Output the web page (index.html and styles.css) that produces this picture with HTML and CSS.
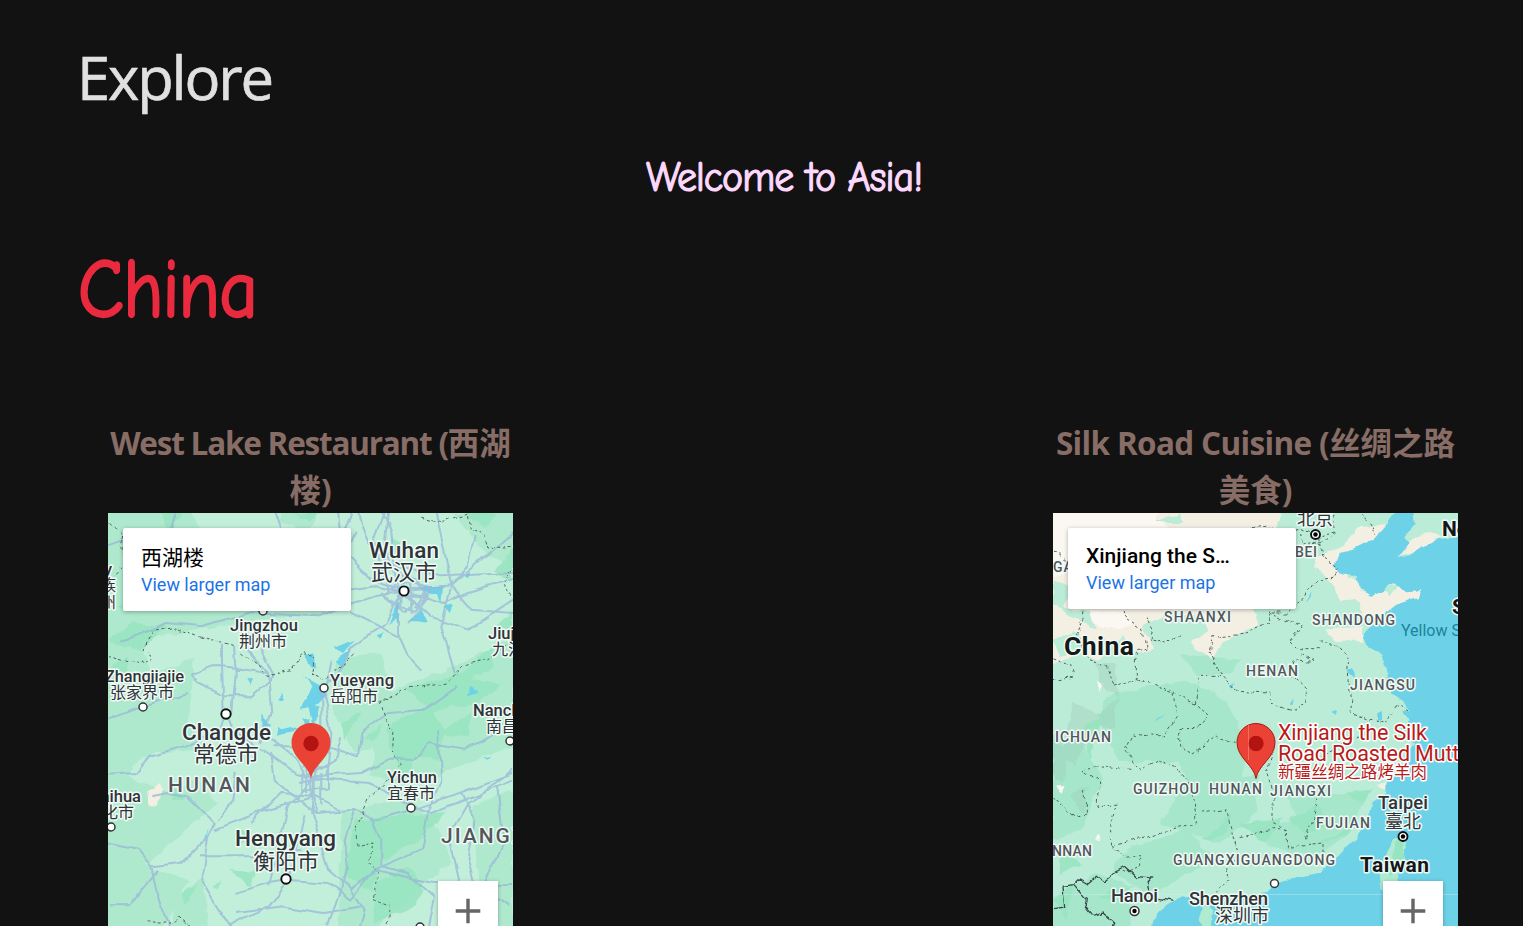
FILE: index.html
```html
<!DOCTYPE html>
<html lang="en">
<head>
<meta charset="utf-8">
<title>Explore</title>
<link rel="stylesheet" href="styles.css">
</head>
<body>
<main class="page">
  <h1 class="title"><svg width="210" height="90"><text x="-3" y="60" textLength="195" lengthAdjust="spacingAndGlyphs">Explore</text></svg></h1>
  <h2 class="welcome"><svg width="280" height="60"><text x="3" y="41" textLength="276" lengthAdjust="spacingAndGlyphs">Welcome to Asia!</text></svg></h2>
  <h2 class="country"><svg width="200" height="94"><text x="-2" y="71" textLength="179" lengthAdjust="spacingAndGlyphs">China</text></svg></h2>
  <section class="places">
    <article class="place">
      <h3 class="name"><span class="latin west">West Lake Restaurant (</span>西湖<br>楼)</h3>
      <div class="map">
        <svg class="canvas" viewBox="0 0 405 420" width="405" height="420">
          <defs>
            <filter id="rough" x="-5%" y="-5%" width="110%" height="110%"><feTurbulence type="fractalNoise" baseFrequency="0.055" numOctaves="3" seed="4"/><feDisplacementMap in="SourceGraphic" scale="9" xChannelSelector="R" yChannelSelector="G"/></filter>
            <filter id="wobble" x="-5%" y="-5%" width="110%" height="110%" color-interpolation-filters="sRGB"><feTurbulence type="fractalNoise" baseFrequency="0.05" numOctaves="1" seed="8"/><feDisplacementMap in="SourceGraphic" scale="9" xChannelSelector="R" yChannelSelector="G"/><feGaussianBlur stdDeviation=".35"/></filter>
          </defs>
          <rect width="405" height="420" fill="#c1efd9"/>
          <g filter="url(#rough)"><g transform="scale(.33333)">
            <path class="mid" d="M-30-30H230L300 80 500 130 660 300 550 310 380 330 260 350 100 380 130 480 260 440 240 640 300 700 100 730 60 790 200 850 240 940 110 1060 240 1100 160 1260H-30ZM530-20H640L600 60 520 30ZM1040 0L1215-20V180L1130 120ZM680 440L820 420 870 600 820 700 740 720 680 600ZM850 540L1215 380V700L1050 760 900 820 790 790 800 640ZM700 900L900 850 990 950 1030 1050 920 1140 790 1260H690ZM1090 880L1215 830V1260H1120ZM260 790L330 870 190 990 150 900ZM200 1160L290 1090 300 1260H190Z"/>
            <path class="dark" d="M160 0L220 0 190 60ZM0 380L80 330 180 340 100 410ZM30 280L150 220 100 300ZM550 0H640L600 25ZM1070 0H1170L1130 45ZM850 70L875 90 860 125ZM1160 180L1215 100V200ZM1170 330L1215 300V390ZM0 470L60 430 50 500ZM700 640L760 595 750 630 705 675ZM770 670L825 635 800 685ZM840 635L960 580 1010 650 990 740 930 730 890 790 840 700ZM900 530L1050 480 1180 520 1100 570 970 600ZM990 660L1090 600 1080 670ZM740 920L860 910 1010 900 930 990 820 1040 790 1140 710 1090ZM800 1110L900 1060 950 1120 920 1180 800 1230ZM1030 510L1150 400 1160 470ZM360 1070L440 1080 430 1120ZM315 1120L340 1095 330 1130ZM220 1140L270 1120 230 1180ZM400 950L440 970 400 995ZM190 820L230 850 190 870Z"/>
            <path class="water" d="M570 590L620 520 590 490 635 515 655 545 615 585ZM510 665L515 635 575 650ZM585 620L605 615 600 640ZM600 580L635 580 615 635ZM680 440L730 405 700 460ZM460 650L460 605 490 635ZM1075 550L1085 515 1115 540ZM415 490L435 500 425 515ZM510 555L525 540 525 560ZM1120 740L1150 735 1140 743ZM285 970L300 940 290 970ZM590 430L620 420 625 465 595 445Z"/>
            <path class="sand" d="M120 840L155 810 165 830 145 880 125 875Z"/>
          </g></g>
          <g filter="url(#wobble)"><g transform="scale(.33333)">
            <path class="water" d="M840 330L880 260 870 310ZM900 325L940 285 960 330 930 325ZM935 225L1005 220 1000 270 990 240 960 240ZM680 405L740 380 705 420ZM800 370L825 360 810 380ZM860 310L875 305 865 330ZM1010 280L1035 275 1025 300ZM1070 190L1090 175 1080 195Z"/>
            <g class="road">
              <path d="M0 100L70 75 180 90 210-20M500-10L530 80 600 110 690 90 740-20M750 0L780 90 840 150 1000 190 1215 180M690-10L700 110 790 200 890 235 1030 220 1215 60M980 0L1010 130 1030 220 1000 340 1040 480M840 0L830 90 870 230 870 360 900 430 940 470M1100 60L1080 160 1030 220M890 235L800 250 740 270 630 310 420 300 280 340 180 330 80 370 40 380M890 235L970 310 1080 350 1215 260M890 235L830 330 730 400 690 480 640 530 640 700 620 790 610 900 660 1070 730 1130 770 1190 750 1260M890 240L800 220 720 230M900 235L1010 270 1080 240 1215 200M1030 220L1090 290 1215 300M890 200L860 160 850 60 820-10M740 50L690 190 730 300 870 370"/>
              <path d="M250 480L300 460 345 460 480 480M250 480L270 510 350 550M345 390V460L350 600 370 650 480 720 560 780 650 800 780 810 900 870 970 900 1215 800M375 400L380 480 370 600M0 785L80 780 120 730 230 700 330 650 350 600M0 620L80 590 240 540M0 990L90 1010 130 1060 220 1050 300 970 320 930 240 850 180 840 130 850M350 550L430 550 500 490 460 410M460 690L490 600 480 480 410 400M620 790L620 900 740 890 800 920 880 900 1000 860 1215 780M620 790L540 880 520 960 480 1120M620 790L760 780 840 740 920 740 960 690 1070 710 1215 640M670 440L650 560 670 660 655 790M0 1180L60 1180 150 1070M130 1060L150 1160 190 1260M300 970L280 1100 340 1200 380 1260M330 920L370 860 380 780M320 950L450 900 620 850M270 1030L440 1030 580 1010M350 1250L480 1180 540 1100 560 1020 590 910M380 1140L480 1110 540 1100 660 1110 730 1160 800 1070 980 1110 1215 1110M390 1200L520 1180 650 1200 760 1180M730 1130L820 1060 820 980 790 910M740 890L710 980 720 1060 680 1180 660 1240M800 1070L940 1010 960 900 1000 800 990 650M1000 1250L1050 1100 1020 970 1080 870 1215 770M820 1060L900 1080 980 1150 960 1260M1170 820L1190 980 1120 1120 1200 1180M1060 840L1100 920 1080 1050 1120 1200"/>
              <path d="M590 790L560 730 480 670M580 770V830H660V760H580M595 760V840M610 770V850M640 780V880M570 800H680M500 700L650 700 750 730 760 660 840 600 950 590 1050 520M700 670L680 740 590 790M490 720L500 800 620 900M430 930L520 840 620 850 700 890M830 0L800 80 840 230 920 260 890 300 830 250 860 210 930 210 960 250 900 330M870 180L930 200 950 240 920 280M820 240L860 280 920 290 970 230 890 190M850 225H970M855 245H960M880 190V290M910 200V300"/>
            </g>
          </g></g>
          <g filter="url(#rough)"><g transform="scale(.33333)">
            <g class="border"><path d="M-5 20L40 60 45 160 20 190M940 10L1010 25 1080 0 1090 50 1130 70 1140 105 1215 100M1215 170L1185 210 1215 250M110 410L130 360 200 345 270 370 380 400M0 430L90 455 135 440 130 410M400 420L450 460 480 490 550 470 580 425 620 430 610 480 650 500 740 420M1215 390L1140 440 1060 460 1020 510 890 530 820 570 830 610 855 650 850 720 880 750 830 810 780 860 745 940 750 1000 795 990 785 1050 810 1080 795 1160 845 1180 835 1250M115 1230L190 1230 210 1210 260 1250"/></g>
          </g></g>
          <g class="dots"><circle class="big" cx="296" cy="78" r="4.6"/><circle cx="155" cy="98" r="4"/><circle cx="35" cy="194" r="4"/><circle class="big" cx="118" cy="201" r="4.7"/><circle cx="216" cy="175" r="4"/><circle cx="402" cy="228" r="4"/><circle cx="303" cy="295" r="4"/><circle cx="3" cy="314" r="4"/><circle class="big" cx="178" cy="366" r="4.7"/><circle cx="312" cy="414" r="4"/></g>
          <g class="label">
            <g class="city"><text x="261" y="45" textLength="70">Wuhan</text><text class="han" x="263" y="67">武汉市</text><text x="74" y="227" textLength="89">Changde</text><text class="han" x="85" y="249">常德市</text><text x="127" y="333" textLength="101">Hengyang</text><text class="han" x="145" y="356">衡阳市</text></g>
            <text x="122" y="118" textLength="68">Jingzhou</text><text class="han" x="131" y="134">荆州市</text><text x="380" y="126">Jiujiang</text><text class="han" x="384" y="142">九江市</text><text x="-4" y="62">y</text><text class="han" x="-8" y="78">族</text><text class="han" x="-8" y="95">州</text><text x="-3" y="169" textLength="79">Zhangjiajie</text><text class="han" x="2" y="185">张家界市</text><text x="222" y="173" textLength="64">Yueyang</text><text class="han" x="222" y="189">岳阳市</text><text x="365" y="203">Nanchang</text><text class="han" x="378" y="219">南昌市</text><text x="279" y="270" textLength="50">Yichun</text><text class="han" x="279" y="286">宜春市</text><text x="33" y="289" text-anchor="end">Huaihua</text><text class="han" x="26" y="305" text-anchor="end">怀化市</text>
            <g class="province large"><text x="60" y="279" textLength="84">HUNAN</text><text x="333" y="330">JIANGXI</text></g>
          </g>
          <path fill="#ea4335" d="M203 266C201 252 183.500 245 183.500 229.500A19.500 19.500 0 0 1 222.500 229.500C222.500 245 205 252 203 266Z"/><circle cx="203" cy="230.500" r="7.700" fill="#b31412"/>
        </svg>
        <div class="card tall"><div class="card-title cjk">西湖楼</div><div class="card-link">View larger map</div></div>
        <button class="plus" aria-label="Zoom in"><svg width="26" height="26"><path d="M13 .7V25.300M.7 13H25.300"/></svg></button>
      </div>
    </article>
    <article class="place">
      <h3 class="name"><span class="latin silk">Silk Road Cuisine (</span>丝绸之路<br>美食)</h3>
      <div class="map">
        <svg class="canvas" viewBox="0 0 405 420" width="405" height="420">
          <rect width="405" height="420" fill="#bbecd8"/>
          <g filter="url(#rough)"><g transform="scale(.33333)">
            <path class="mid2" d="M160 550L400 500 520 560 580 700 560 800 420 850 380 750 200 740 130 620ZM400 810L620 780 610 900 500 990 320 930ZM230 1000L400 950 500 1040 390 1090 290 1150 180 1080ZM600 950L820 900 900 950 790 1030 650 1000ZM0 660L90 700 150 800 80 950 0 980ZM380 420L560 440 540 480 430 490ZM0 1150L130 1080 230 1120 230 1260H0ZM700 850L960 830 880 960 740 920Z"/>
            <path class="grey" d="M130 450L180 450 200 560 160 530ZM60 570L130 600 200 560 180 640 110 650 70 760 30 730ZM0 680L50 710 30 810 0 790ZM50 840L110 820 90 900Z"/>
            <path class="dark" d="M440 980L540 900 510 970ZM550 930L690 920 640 990ZM710 920L800 870 820 930 760 970ZM80 650L150 600 110 740ZM780 1000L900 930 880 960ZM0 1160L60 1110 40 1220ZM130 1150L250 1120 180 1160ZM30 1010L90 1060 20 1080ZM880 840L960 830 930 870ZM1010 1000L1050 980 1040 1050Z"/>
            <path class="sand" d="M-30-30H700L660 60 590 40 540 170 610 300 620 340 560 360 500 390 480 440 410 390 470 350 450 310 330 310 270 340 300 410 240 430 210 360 140 440 80 420-30 470ZM790 130L870 100 920 40 1000 30 960 100 900 140 880 190 920 200 920 240 1000 220 1060 200 1110 230 1100 260 1000 300 930 310 920 270 860 260 830 200 780 160ZM1040 130L1070 80 1130 60 1170 70 1110 110ZM820 350L930 340 930 390 850 380ZM970 819L1010 790 1000 830Z"/>
            <path fill="#fbf8f2" d="M-30-30H340L300 20 350 45 230 90 100 180 0 190ZM100 300L220 290 240 340 150 350ZM135 500L155 510 145 540ZM10 820L35 820 25 840ZM120 980L130 965 140 980Z"/>
            <path class="wash" d="M300 30L380 0 390 30ZM0 200L60 230 30 280 110 300 130 350 60 310 0 270ZM700 0H880L840 90 760 60 720 110ZM680 300L780 290 760 360 690 370ZM980 220L1040 215 1010 250ZM0 380L60 360 110 400 20 430ZM150 380L200 400 160 440ZM340 330L400 320 380 370Z"/>
            <path fill="#6dd2e8" d="M1040-20L1000 40 960 80 900 110 860 120 848 150 860 180 915 190 920 230 950 248 985 235 1020 210 1060 235 1103 232 1095 255 1030 275 985 310 945 345 930 375 945 400 980 411 1000 470 1005 520 1040 560 1070 590 1045 595 1070 625 1050 650 1090 690 1060 720 1075 740 1000 790 1000 840 960 870 950 920 910 980 880 1010 850 1030 800 1080 760 1090 710 1100 670 1110 640 1140 560 1150 480 1175 440 1180 430 1160 390 1150 360 1170 310 1200 280 1280H1280V60L1150 80 1110 100 1075 125 1035 135 1060 100 1070 85 1050 75 1085 30 1080-20Z"/>
            <path fill="#aeebd0" d="M450 1180L480 1190 475 1260H460L440 1220ZM1020 980L1060 965 1068 1000 1050 1060 1015 1130H985L980 1080 1000 1020Z"/>
            <path fill="#96e5c0" d="M1035 970L1060 965 1060 1040 1005 1090Z"/>
            <path class="water" d="M760 270L785 235 780 255ZM885 475L905 465 910 495ZM835 590L850 585 845 600ZM710 570L720 550 715 575ZM970 600L990 595 990 620 970 625ZM530 520L545 510 540 530ZM730 480L760 510ZM310 620L340 600 320 620Z"/>
            <g class="border"><path d="M0 120L40 150M580 45L640 40 700 60 740 45 790 70 850 60 840 0M740 60L745 90 830 80 850 60M910-10L950 30 965 65M800 70L810 130 860 160 840 190 790 200 750 260 700 300 650 300 650 330 580 360 480 370 475 420 510 490 550 535 650 540 655 570 720 595 740 580 760 560 755 530 710 490 720 440 780 445 740 420M0 500L60 490 50 460 0 440M100 250L90 320 60 390M80 380L110 440 160 460 180 520 250 500 250 420 280 410 270 350 220 320 220 290M280 310L300 350 290 380 340 390 390 360M250 500L360 540 370 610 330 670 240 660 215 710 260 770 320 740 370 760 420 830 430 930 310 960 180 1000 170 940 190 880 135 880 140 810 90 770 160 760 240 770M360 540L430 570 465 610 440 640 380 650 380 700 420 720 490 670 550 690 610 660M430 570L440 490 510 490M650 300L750 340 710 380 740 410 800 410M800 390L850 390 890 440 885 500 900 560 890 600 940 620 1000 630 1040 580 1065 590M660 720L640 780 660 830 660 930 700 950 700 1000 810 990 810 1030M800 840L790 900 760 980M450 900L520 890 540 970 560 1030 520 1060 530 1100 490 1140M560 980L660 950 700 950M180 1000L210 1030 260 1025 260 1060 210 1080M0 850L50 910 100 900 100 830M740 760L850 700 950 650"/></g>
            <path class="nation" d="M0 1190L35 1185 30 1120 60 1115 80 1095 105 1110 130 1090 155 1110 190 1080 220 1065 245 1090 298 1095 285 1110 290 1130 320 1160 360 1168M60 1115L100 1160 95 1180 120 1210 150 1200 185 1230 180 1250"/>
          </g></g>
          <path stroke="#d3eff0" opacity=".4" d="M0 381.500H405"/>
          <g class="dots"><circle class="big" cx="262.500" cy="21.500" r="4.5"/><circle class="big" cx="350" cy="323.500" r="4.500"/><circle class="capital" cx="81.500" cy="398" r="4.500"/><circle cx="221.500" cy="370.500" r="4"/></g>
          <g><circle cx="262.500" cy="21.500" r="2.200"/><circle cx="350" cy="323.500" r="2.200"/><circle cx="81.500" cy="398" r="2.200"/></g>
          <g class="label">
            <g class="province"><text x="0" y="59">GANSU</text><text x="242" y="44" textLength="23">BEI</text><text x="111" y="109" textLength="68">SHAANXI</text><text x="259" y="112" textLength="84">SHANDONG</text><text x="193" y="163" textLength="53">HENAN</text><text x="297" y="177" textLength="66">JIANGSU</text><text x="2" y="229" textLength="57">ICHUAN</text><text x="80" y="281" textLength="67">GUIZHOU</text><text x="156" y="281" textLength="54">HUNAN</text><text x="217" y="283" textLength="62">JIANGXI</text><text x="263" y="315" textLength="55">FUJIAN</text><text x="-1" y="343" textLength="41">NNAN</text><text x="120" y="352" textLength="163">GUANGXIGUANGDONG</text></g>
            <g class="country-label"><text class="china" x="11" y="142" textLength="70">China</text><text x="307" y="359" textLength="69">Taiwan</text><text x="389" y="23">North Korea</text><text x="399" y="101">South Korea</text></g>
            <g class="capital-label"><text class="han" x="244" y="12">北京</text><text x="325" y="296" textLength="50">Taipei</text><text class="han" x="332" y="315">臺北</text><text x="58" y="389" textLength="47">Hanoi</text><text x="136" y="392" textLength="79">Shenzhen</text><text class="han" x="162" y="409">深圳市</text></g>
            <text class="sea" x="348" y="123">Yellow Sea</text>
            <g class="pin-label"><text x="225" y="227" textLength="149">Xinjiang the Silk</text><text x="225" y="248" textLength="205">Road Roasted Mutton</text><text class="small" x="225" y="265" textLength="149">新疆丝绸之路烤羊肉</text></g>
          </g>
          <path fill="#ea4335" stroke="#b31412" stroke-width="1" d="M203 265.500C201 252 184 245 184 229.500A19 19 0 0 1 222 229.500C222 245 205 252 203 265.500Z"/><circle cx="203" cy="230.500" r="7.700" fill="#b31412"/><path d="M195.500 212V247" stroke="#fff" stroke-opacity=".25"/>
        </svg>
        <div class="card"><div class="card-title">Xinjiang the S…</div><div class="card-link">View larger map</div></div>
        <button class="plus" aria-label="Zoom in"><svg width="26" height="26"><path d="M13 .7V25.300M.7 13H25.300"/></svg></button>
      </div>
    </article>
  </section>
</main>
</body>
</html>
```

FILE: styles.css
```css
* { box-sizing: border-box; }
html, body { margin: 0; height: 926px; overflow: hidden; background: #121212; }
.page { height: 926px; overflow: hidden; padding: 40px 37px 0 80px; font-family: "Segoe UI", "Open Sans", "Noto Sans CJK SC", sans-serif; }
h1, h2, h3 { margin: 0; }
h1 svg, h2 svg { display: block; overflow: visible; }
.title { height: 110px; }
.title text { font-size: 61px; font-weight: 400; letter-spacing: -2.200px; fill: #e0e0e0; stroke: #e0e0e0; stroke-width: .6; }
.welcome { display: flex; justify-content: center; height: 96px; }
.welcome text { font: 400 42px "Comic Sans MS", "Comic Neue", Lato, sans-serif; letter-spacing: -1px; fill: #fdd9fd; stroke: #fdd9fd; stroke-width: 1.2; stroke-linejoin: round; }
.country { height: 173px; }
.country text { font: 400 82px "Comic Sans MS", "Comic Neue", Lato, sans-serif; letter-spacing: -1px; fill: #ea2a3e; stroke: #ea2a3e; stroke-width: 2.4; stroke-linejoin: round; }
.places { display: flex; justify-content: space-between; padding: 0 28px; }
.place { width: 405px; }
.name { height: 94px; font-size: 31.500px; line-height: 47px; font-weight: 700; color: #876d66; text-align: center; white-space: nowrap; }
.west { letter-spacing: -1.230px; }
.silk { letter-spacing: -.650px; }
.map { position: relative; height: 413px; overflow: hidden; }
.canvas { display: block; }
.mid { fill: #aee9cd; }
.mid2 { fill: #a6e7cc; }
.dark { fill: #97e4c0; opacity: .85; }
.grey { fill: #9fceba; opacity: .4; }
.water { fill: #6dd2e8; }
.sand { fill: #f4efe3; }
.wash { fill: #bbecd8; }
.road { fill: none; stroke: #98b6d8; stroke-width: 6; stroke-linejoin: round; opacity: .75; }
.border { fill: none; stroke: #50635e; stroke-width: 3; stroke-dasharray: 9 8; }
.nation { fill: none; stroke: #37474a; stroke-width: 4; }
.dots circle { fill: #fff; stroke: #333; stroke-width: 1.500; }
.dots .big { stroke: #111; stroke-width: 1.900; }
.label { font: 500 16.500px Roboto, "Noto Sans CJK SC", sans-serif; fill: #303338; stroke: #effaf5; stroke-width: 3px; stroke-linejoin: round; paint-order: stroke; }
.label .han { font-weight: 400; }
.label > .han { font-size: 16px; }
.city { font-size: 22.500px; }
.city .han { font-size: 22px; }
.province { font-size: 14px; letter-spacing: 1px; fill: #53575c; }
.province.large { font-size: 21px; letter-spacing: 2px; }
.country-label { font-size: 21px; font-weight: 700; fill: #151719; }
.china { font-size: 26.500px; }
.capital-label { font-size: 18.500px; }
.capital-label .han { font-size: 18px; }
.sea { font-size: 16px; font-weight: 400; fill: #19849b; stroke: none; }
.pin-label { font-size: 21.500px; font-weight: 400; fill: #b91a1a; stroke: #fff; }
.pin-label .small { font-size: 16.500px; }
.card { position: absolute; left: 15px; top: 15px; width: 228px; height: 81px; padding: 14px 18px; border-radius: 2px; background: #fff; box-shadow: 0 1px 4px rgba(0, 0, 0, .3); font-family: Roboto, "Noto Sans CJK SC", sans-serif; white-space: nowrap; }
.card.tall { height: 83px; padding-top: 16px; }
.card-title { font-size: 21px; line-height: 28px; font-weight: 500; color: #000; }
.card-title.cjk { font-weight: 400; }
.card-link { font-size: 18px; line-height: 26px; color: #1a73e8; }
.plus { position: absolute; left: 330px; top: 368px; width: 60px; height: 60px; padding: 0; border: 0; background: #fff; box-shadow: 0 1px 4px rgba(0, 0, 0, .3); }
.plus svg { display: block; margin: 0 auto; }
.plus path { stroke: #666; stroke-width: 3.400; }
```
